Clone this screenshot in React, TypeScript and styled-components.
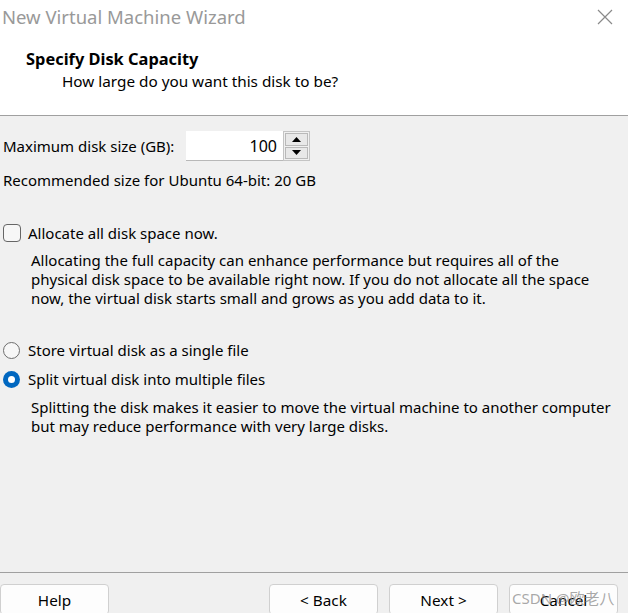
import React from "react";
import styled, { createGlobalStyle } from "styled-components";

const Global = createGlobalStyle`
  html, body { margin: 0; padding: 0; background: #f0f0f0; }
  body { font-family: "Noto Sans", "Open Sans", "Noto Sans CJK SC", sans-serif; color: #000; }
  * { box-sizing: border-box; }
`;

const Window = styled.div`
  position: relative;
  width: 628px;
  height: 613px;
  overflow: hidden;
  display: flex;
  flex-direction: column;
  background: #f0f0f0;
  font-size: 15px;
`;

const TitleBar = styled.div`
  height: 33px;
  background: #fff;
  display: flex;
  align-items: center;
  justify-content: space-between;
  padding: 0 15px 0 2px;
`;

const TitleText = styled.div`
  font-size: 18.5px;
  color: #999;
  line-height: 33px;
`;

const CloseButton = styled.div`
  width: 17px;
  height: 17px;
  display: flex;
  align-items: center;
  justify-content: center;
  margin-top: 1px;
`;

const Header = styled.div`
  height: 83px;
  background: #fff;
  border-bottom: 1px solid #a0a0a0;
  padding: 15px 0 0 26px;
`;

const HeaderTitle = styled.div`
  font-weight: 700;
  font-size: 16.4px;
  line-height: 22px;
`;

const HeaderSub = styled.div`
  padding-left: 36px;
  font-size: 15.3px;
  line-height: 21px;
  margin-top: 1px;
`;

const Body = styled.div`
  flex: 1;
  display: flex;
  flex-direction: column;
  padding-left: 3px;
`;

const Spacer = styled.div<{ $h: number }>`
  height: ${(p) => p.$h}px;
  flex: none;
`;

const SizeRow = styled.div`
  display: flex;
  align-items: center;
  height: 30px;
`;

const Label = styled.div<{ $w?: number }>`
  width: ${(p) => (p.$w ? `${p.$w}px` : "auto")};
  line-height: 19px;
  white-space: nowrap;
`;

const NumberBox = styled.div`
  width: 97px;
  height: 30px;
  background: #fff;
  border-bottom: 1px solid #b8b8b8;
  display: flex;
  align-items: center;
  justify-content: flex-end;
  padding-right: 6px;
  font-size: 16px;
`;

const Spin = styled.div`
  width: 27px;
  height: 30px;
  border: 1px solid #c4c4c4;
  display: flex;
  flex-direction: column;
  gap: 1px;
  padding: 1px;
  background: #f0f0f0;
`;

const SpinButton = styled.div`
  flex: 1;
  background: #e8e8e8;
  border: 1px solid #b9b9b9;
  display: flex;
  align-items: center;
  justify-content: center;
`;

const Line = styled.div`
  line-height: 19px;
  white-space: nowrap;
`;

const OptionRow = styled.div`
  display: flex;
  align-items: center;
  height: 20px;
  gap: 7px;
`;

const CheckBox = styled.div`
  width: 18px;
  height: 18px;
  border: 1px solid #666;
  border-radius: 4px;
  background: #f7f7f7;
`;

const Radio = styled.div<{ $on?: boolean }>`
  width: 17px;
  height: 17px;
  border-radius: 50%;
  margin-right: 1px;
  border: ${(p) => (p.$on ? "none" : "1px solid #6e6e6e")};
  background: ${(p) => (p.$on ? "#0067c0" : "#f7f7f7")};
  display: flex;
  align-items: center;
  justify-content: center;
  &::after {
    content: "";
    display: ${(p) => (p.$on ? "block" : "none")};
    width: 7px;
    height: 7px;
    border-radius: 50%;
    background: #fff;
  }
`;

const Paragraph = styled.div`
  padding-left: 28px;
  line-height: 19px;
`;

const Footer = styled.div`
  border-top: 1px solid #a0a0a0;
  height: 41px;
  padding: 11px 10px 0 0;
  display: flex;
  gap: 11px;
  flex: none;
`;

const Button = styled.div<{ $push?: boolean }>`
  width: 109px;
  height: 31px;
  background: #fdfdfd;
  border: 1px solid #d0d0d0;
  border-radius: 4px;
  display: flex;
  align-items: center;
  justify-content: center;
  font-size: 15.3px;
  margin-left: ${(p) => (p.$push ? "auto" : "0")};
`;

const Watermark = styled.div`
  position: absolute;
  left: 512px;
  top: 587px;
  font-size: 15px;
  color: rgba(140, 140, 140, 0.75);
  white-space: nowrap;
  pointer-events: none;
`;

const Tri = ({ up }: { up?: boolean }) => (
  <svg width="9" height="5" viewBox="0 0 9 5">
    <path d={up ? "M0 5 L4.5 0 L9 5 Z" : "M0 0 L4.5 5 L9 0 Z"} fill="#000" />
  </svg>
);

export default function App() {
  return (
    <>
      <Global />
      <Window>
        <TitleBar>
          <TitleText>New Virtual Machine Wizard</TitleText>
          <CloseButton>
            <svg width="16" height="16" viewBox="0 0 16 16">
              <path d="M1 1 L15 15 M15 1 L1 15" stroke="#8a8a8a" strokeWidth="1.2" />
            </svg>
          </CloseButton>
        </TitleBar>
        <Header>
          <HeaderTitle>Specify Disk Capacity</HeaderTitle>
          <HeaderSub>How large do you want this disk to be?</HeaderSub>
        </Header>
        <Body>
          <Spacer $h={15} />
          <SizeRow>
            <Label $w={183}>Maximum disk size (GB):</Label>
            <NumberBox>100</NumberBox>
            <Spin>
              <SpinButton>
                <Tri up />
              </SpinButton>
              <SpinButton>
                <Tri />
              </SpinButton>
            </Spin>
          </SizeRow>
          <Spacer $h={10} />
          <Line>Recommended size for Ubuntu 64-bit: 20 GB</Line>
          <Spacer $h={33} />
          <OptionRow>
            <CheckBox />
            <Label>Allocate all disk space now.</Label>
          </OptionRow>
          <Spacer $h={8} />
          <Paragraph>
            <Line>Allocating the full capacity can enhance performance but requires all of the</Line>
            <Line>physical disk space to be available right now. If you do not allocate all the space</Line>
            <Line>now, the virtual disk starts small and grows as you add data to it.</Line>
          </Paragraph>
          <Spacer $h={32} />
          <OptionRow>
            <Radio />
            <Label>Store virtual disk as a single file</Label>
          </OptionRow>
          <Spacer $h={9} />
          <OptionRow>
            <Radio $on />
            <Label>Split virtual disk into multiple files</Label>
          </OptionRow>
          <Spacer $h={9} />
          <Paragraph>
            <Line>Splitting the disk makes it easier to move the virtual machine to another computer</Line>
            <Line>but may reduce performance with very large disks.</Line>
          </Paragraph>
        </Body>
        <Footer>
          <Button>Help</Button>
          <Button $push>&lt; Back</Button>
          <Button>Next &gt;</Button>
          <Button>Cancel</Button>
        </Footer>
        <Watermark>CSDN @欧老八</Watermark>
      </Window>
    </>
  );
}
